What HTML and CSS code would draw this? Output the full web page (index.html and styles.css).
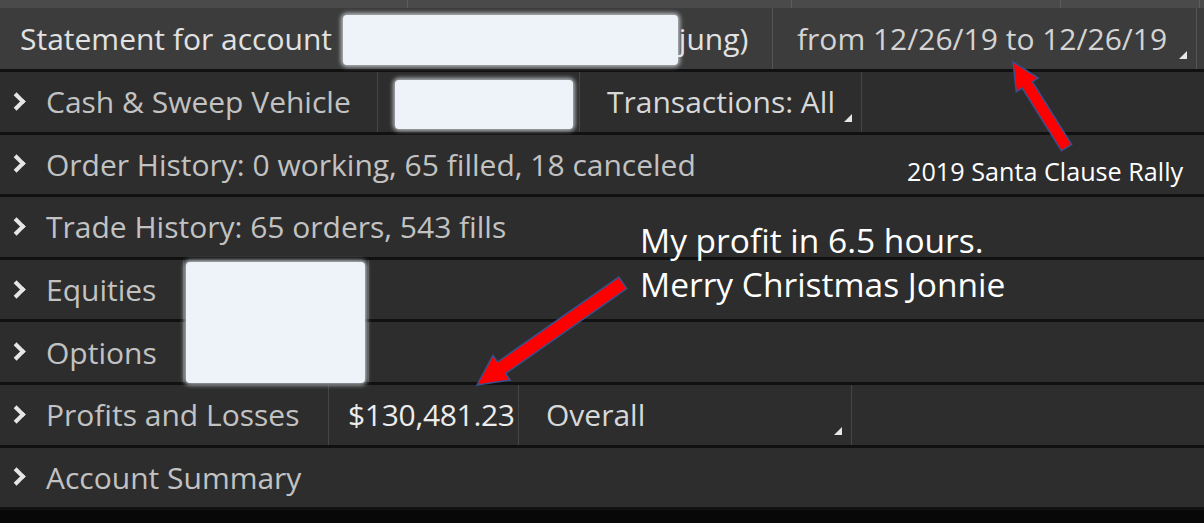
FILE: index.html
```html
<!DOCTYPE html>
<html lang="en">
<head>
  <meta charset="UTF-8" />
  <meta name="viewport" content="width=device-width, initial-scale=1.0" />
  <title>Account Statement</title>
  <link rel="stylesheet" href="styles.css">
</head>
<body>
  <div class="page">
    <div class="strip">
      <span class="strip-cell" style="width:408px"></span>
      <span class="strip-cell" style="width:384px"></span>
      <span class="strip-cell" style="width:269px"></span>
      <span class="strip-cell" style="width:139px"></span>
    </div>

    <div class="row head">
      <div class="cell title">Statement for account<span class="acct">(jung)</span></div>
      <div class="cell range">from 12/26/19 to 12/26/19<span class="corner"></span></div>
    </div>

    <div class="row">
      <div class="cell label sep" style="width:378px"><span class="chev"></span>Cash &amp; Sweep Vehicle</div>
      <div class="cell sep" style="width:202px"></div>
      <div class="cell select sep" style="width:282px">Transactions: All<span class="corner"></span></div>
    </div>

    <div class="row">
      <div class="cell label"><span class="chev"></span>Order History: 0 working, 65 filled, 18 canceled</div>
    </div>

    <div class="row">
      <div class="cell label"><span class="chev"></span>Trade History: 65 orders, 543 fills</div>
    </div>

    <div class="row">
      <div class="cell label sep" style="width:184px"><span class="chev"></span>Equities</div>
      <div class="cell sep" style="width:185px"></div>
    </div>

    <div class="row">
      <div class="cell label sep" style="width:184px"><span class="chev"></span>Options</div>
      <div class="cell sep" style="width:185px"></div>
    </div>

    <div class="row">
      <div class="cell label sep" style="width:329px"><span class="chev"></span>Profits and Losses</div>
      <div class="cell value sep" style="width:190px">$130,481.23</div>
      <div class="cell select sep" style="width:333px">Overall<span class="corner"></span></div>
    </div>

    <div class="row">
      <div class="cell label"><span class="chev"></span>Account Summary</div>
    </div>

    <!-- redactions -->
    <div class="redact" style="left:343px;top:15px;width:335px;height:50px"></div>
    <div class="redact" style="left:395px;top:80px;width:178px;height:49px"></div>
    <div class="redact" style="left:186px;top:262px;width:179px;height:121px"></div>

    <!-- annotations -->
    <svg class="marks" width="1204" height="523" viewBox="0 0 1204 523">
      <polygon transform="translate(1013,62) rotate(58)" points="0,0 27,-13 27,-6 101,-6 101,6 27,6 27,13" />
      <polygon transform="translate(477,385) rotate(-35)" points="0,0 30,-15 30,-7 178,-7 178,7 30,7 30,15" />
    </svg>
    <div class="note rally">2019 Santa Clause Rally</div>
    <div class="note big">My profit in 6.5 hours.<br>Merry Christmas Jonnie</div>
  </div>
</body>
</html>
```

FILE: styles.css
```css
body { margin: 0; background: #080808; font-family: 'Open Sans', 'Noto Sans', sans-serif; }
.page { position: relative; width: 1204px; height: 523px; overflow: hidden; background: #080808; }
.strip { display: flex; height: 8px; background: #4a4a4a; }
.strip-cell { border-right: 1px solid #5c5c5c; box-sizing: border-box; }

.row { display: flex; height: 62.6px; box-sizing: border-box; border-bottom: 3px solid #111; background: #2d2d2d; color: #c2c2c2; font-size: 30px; }
.row.head { height: 64px; background: #3c3c3c; color: #e2e2e2; }
.cell { position: relative; display: flex; align-items: center; box-sizing: border-box; white-space: nowrap; }
.cell.sep { border-right: 1px solid #454545; }
.head .cell { border-right: 1px solid #555; }

.title { width: 773px; padding-left: 20px; }
.acct { margin-left: 338px; }
.range { width: 424px; padding-left: 24px; color: #d4d4d4; }

.label { padding-left: 46px; padding-right: 24px; }
.chev { position: absolute; left: 10px; top: 50%; width: 9px; height: 9px; margin-top: -7px; border-top: 4px solid #e6e6e6; border-right: 4px solid #e6e6e6; transform: rotate(45deg); }
.value { padding-left: 19px; color: #ececec; letter-spacing: -0.3px; }
.select { padding-left: 27px; color: #d8d8d8; }
.corner { position: absolute; right: 9px; bottom: 10px; width: 0; height: 0; border-left: 8px solid transparent; border-bottom: 8px solid #e6e6e6; }

.redact { position: absolute; background: #eef3fa; border-radius: 4px; box-shadow: 0 0 4px 2px rgba(238,243,250,0.7); }

.marks { position: absolute; left: 0; top: 0; }
.marks polygon { fill: #ff0000; stroke: #3a4f8c; stroke-width: 1.5; }

.note { position: absolute; color: #ffffff; font-family: 'Open Sans', 'Noto Sans', sans-serif; white-space: nowrap; }
.rally { left: 907px; top: 159px; font-size: 25.2px; line-height: 1; }
.big { left: 640px; top: 218px; font-size: 33.5px; line-height: 44px; }
```
